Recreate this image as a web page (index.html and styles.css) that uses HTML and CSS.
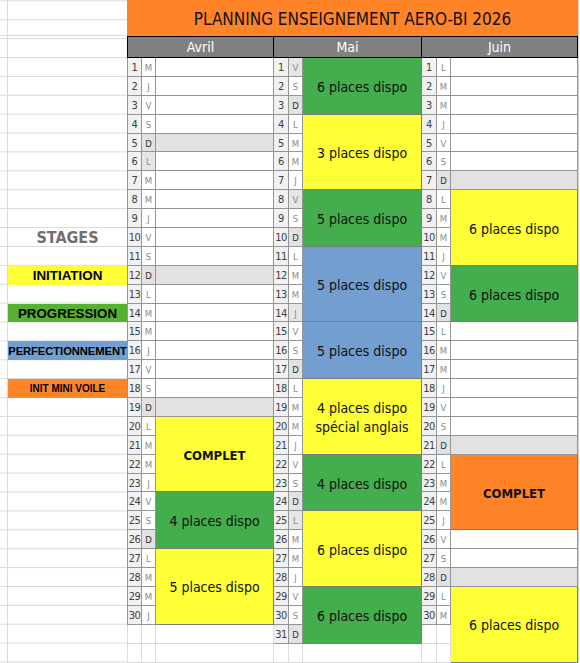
FILE: index.html
```html
<!DOCTYPE html>
<html lang="fr">
<head>
<meta charset="utf-8">
<title>Planning enseignement Aero-BI 2026</title>
<link rel="stylesheet" href="styles.css">
</head>
<body>
<div class="sheet">
  <div class="side">
    <div class="stages">STAGES</div>
    <div class="tag t-init">INITIATION</div>
    <div class="tag t-prog">PROGRESSION</div>
    <div class="tag t-perf">PERFECTIONNEMENT</div>
    <div class="tag t-mini">INIT MINI VOILE</div>
  </div>
  <div class="planning">
    <div class="title">PLANNING ENSEIGNEMENT AERO-BI 2026</div>
    <div class="heads">
      <div class="mh mh-avril">Avril</div>
      <div class="mh mh-mai">Mai</div>
      <div class="mh mh-juin">Juin</div>
    </div>
    <div class="months">
      <div class="month avril">
        <div class="n">1</div><div class="n">2</div><div class="n">3</div><div class="n">4</div><div class="n">5</div><div class="n">6</div><div class="n">7</div><div class="n">8</div><div class="n">9</div><div class="n">10</div>
        <div class="n">11</div><div class="n">12</div><div class="n">13</div><div class="n">14</div><div class="n">15</div><div class="n">16</div><div class="n">17</div><div class="n">18</div><div class="n">19</div><div class="n">20</div>
        <div class="n">21</div><div class="n">22</div><div class="n">23</div><div class="n">24</div><div class="n">25</div><div class="n">26</div><div class="n">27</div><div class="n">28</div><div class="n">29</div><div class="n">30</div>
        <div class="n x"></div><div class="n x"></div>

        <div class="d">M</div><div class="d">J</div><div class="d">V</div><div class="d">S</div><div class="d sun">D</div><div class="d hol">L</div><div class="d">M</div><div class="d">M</div><div class="d">J</div><div class="d">V</div>
        <div class="d">S</div><div class="d sun">D</div><div class="d">L</div><div class="d">M</div><div class="d">M</div><div class="d">J</div><div class="d">V</div><div class="d">S</div><div class="d sun">D</div><div class="d">L</div>
        <div class="d">M</div><div class="d">M</div><div class="d">J</div><div class="d">V</div><div class="d">S</div><div class="d sun">D</div><div class="d">L</div><div class="d">M</div><div class="d">M</div><div class="d">J</div>
        <div class="d x"></div><div class="d x"></div>

        <div class="c"></div><div class="c"></div><div class="c"></div><div class="c"></div><div class="c sun"></div>
        <div class="c"></div><div class="c"></div><div class="c"></div><div class="c"></div><div class="c"></div><div class="c"></div><div class="c sun"></div>
        <div class="c"></div><div class="c"></div><div class="c"></div><div class="c"></div><div class="c"></div><div class="c"></div><div class="c sun"></div>
        <div class="b yellow s4 strong">COMPLET</div>
        <div class="b green s3">4 places dispo</div>
        <div class="b yellow s4">5 places dispo</div>
        <div class="c x"></div><div class="c x"></div>
      </div>

      <div class="month mai">
        <div class="n">1</div><div class="n">2</div><div class="n">3</div><div class="n">4</div><div class="n">5</div><div class="n">6</div><div class="n">7</div><div class="n">8</div><div class="n">9</div><div class="n">10</div>
        <div class="n">11</div><div class="n">12</div><div class="n">13</div><div class="n">14</div><div class="n">15</div><div class="n">16</div><div class="n">17</div><div class="n">18</div><div class="n">19</div><div class="n">20</div>
        <div class="n">21</div><div class="n">22</div><div class="n">23</div><div class="n">24</div><div class="n">25</div><div class="n">26</div><div class="n">27</div><div class="n">28</div><div class="n">29</div><div class="n">30</div>
        <div class="n">31</div><div class="n x"></div>

        <div class="d hol">V</div><div class="d">S</div><div class="d sun">D</div><div class="d">L</div><div class="d">M</div><div class="d">M</div><div class="d">J</div><div class="d hol">V</div><div class="d">S</div><div class="d sun">D</div>
        <div class="d">L</div><div class="d">M</div><div class="d">M</div><div class="d hol">J</div><div class="d">V</div><div class="d">S</div><div class="d sun">D</div><div class="d">L</div><div class="d">M</div><div class="d">M</div>
        <div class="d">J</div><div class="d">V</div><div class="d">S</div><div class="d sun">D</div><div class="d hol">L</div><div class="d">M</div><div class="d">M</div><div class="d">J</div><div class="d">V</div><div class="d">S</div>
        <div class="d sun">D</div><div class="d x"></div>

        <div class="b green s3">6 places dispo</div>
        <div class="b yellow s4">3 places dispo</div>
        <div class="b green s3">5 places dispo</div>
        <div class="b blue s4">5 places dispo</div>
        <div class="b blue s3">5 places dispo</div>
        <div class="b yellow s4">4 places dispo<br>spécial anglais</div>
        <div class="b green s3">4 places dispo</div>
        <div class="b yellow s4">6 places dispo</div>
        <div class="b green s3">6 places dispo</div>
        <div class="c x"></div>
      </div>

      <div class="month juin">
        <div class="n">1</div><div class="n">2</div><div class="n">3</div><div class="n">4</div><div class="n">5</div><div class="n">6</div><div class="n">7</div><div class="n">8</div><div class="n">9</div><div class="n">10</div>
        <div class="n">11</div><div class="n">12</div><div class="n">13</div><div class="n">14</div><div class="n">15</div><div class="n">16</div><div class="n">17</div><div class="n">18</div><div class="n">19</div><div class="n">20</div>
        <div class="n">21</div><div class="n">22</div><div class="n">23</div><div class="n">24</div><div class="n">25</div><div class="n">26</div><div class="n">27</div><div class="n">28</div><div class="n">29</div><div class="n">30</div>
        <div class="n x"></div><div class="n x"></div>

        <div class="d">L</div><div class="d">M</div><div class="d">M</div><div class="d">J</div><div class="d">V</div><div class="d">S</div><div class="d sun">D</div><div class="d">L</div><div class="d">M</div><div class="d">M</div>
        <div class="d">J</div><div class="d">V</div><div class="d">S</div><div class="d sun">D</div><div class="d">L</div><div class="d">M</div><div class="d">M</div><div class="d">J</div><div class="d">V</div><div class="d">S</div>
        <div class="d sun">D</div><div class="d">L</div><div class="d">M</div><div class="d">M</div><div class="d">J</div><div class="d">V</div><div class="d">S</div><div class="d sun">D</div><div class="d">L</div><div class="d">M</div>
        <div class="d x"></div><div class="d x"></div>

        <div class="c"></div><div class="c"></div><div class="c"></div><div class="c"></div><div class="c"></div><div class="c"></div><div class="c sun"></div>
        <div class="b yellow s4">6 places dispo</div>
        <div class="b green s3">6 places dispo</div>
        <div class="c"></div><div class="c"></div><div class="c"></div><div class="c"></div><div class="c"></div><div class="c"></div><div class="c sun"></div>
        <div class="b orange s4 strong">COMPLET</div>
        <div class="c"></div><div class="c"></div><div class="c sun"></div>
        <div class="b yellow s4">6 places dispo</div>
      </div>
    </div>
  </div>
  <div class="edge"></div>
</div>
</body>
</html>
```
FILE: styles.css
```css
* {
  box-sizing: border-box;
}

html, body {
  margin: 0;
  padding: 0;
  background: #fff;
}

body {
  width: 580px;
  height: 663px;
  overflow: hidden;
  font-family: "DejaVu Sans Condensed", "DejaVu Sans", sans-serif;
  font-stretch: condensed;
  color: #111;
}

.sheet {
  display: flex;
  width: 580px;
  height: 663px;
}

/* ---------- left legend column (spreadsheet gridlines) ---------- */
.side {
  flex: none;
  width: 127px;
  height: 663px;
  display: grid;
  grid-template-columns: 8px 119px;
  grid-template-rows: 36px 22px repeat(32, 18.9px);
  overflow: hidden;
  background-image:
    linear-gradient(to right, transparent 7px, #d9d9d9 7px, #d9d9d9 8px, transparent 8px),
    linear-gradient(to bottom, transparent 35px, #d9d9d9 35px, #d9d9d9 36px, transparent 36px, transparent 57px, #d9d9d9 57px, #d9d9d9 58px, transparent 58px),
    repeating-linear-gradient(to bottom, transparent 0, transparent 17.9px, #d9d9d9 17.9px, #d9d9d9 18.9px);
  background-repeat: no-repeat, no-repeat, repeat-y;
  background-position: 0 0, 0 0, 0 58px;
  background-size: 100% 100%, 100% 100%, 100% 18.9px;
}

.stages {
  grid-column: 2;
  grid-row: 12;
  display: flex;
  align-items: center;
  justify-content: center;
  font-size: 16px;
  font-weight: bold;
  color: #707070;
  white-space: nowrap;
  padding-top: 1px;
}

.tag {
  grid-column: 2;
  display: flex;
  align-items: center;
  justify-content: center;
  white-space: nowrap;
  overflow: hidden;
  font-family: "Liberation Sans", Arial, sans-serif;
  font-stretch: normal;
  font-weight: bold;
  color: #000;
}

.t-init {
  grid-row: 14;
  background: #ffff38;
  font-size: 13.4px;
}

.t-prog {
  grid-row: 16;
  background: #56b131;
  font-size: 13.3px;
}

.t-perf {
  grid-row: 18;
  background: #729fcf;
  font-size: 11.2px;
  letter-spacing: -0.05px;
}

.t-mini {
  grid-row: 20;
  background: #ff8427;
  font-size: 10px;
}

/* ---------- planning ---------- */
.planning {
  flex: none;
  width: 451px;
  display: flex;
  flex-direction: column;
}

.title {
  height: 36px;
  background: #ff8427;
  display: flex;
  align-items: center;
  justify-content: center;
  font-size: 17px;
  color: #111;
  padding-top: 2px;
}

.heads {
  display: flex;
  height: 22px;
}

.mh {
  background: #808080;
  color: #fff;
  font-size: 14px;
  display: flex;
  align-items: center;
  justify-content: center;
  border-top: 1px solid #000;
  border-bottom: 1px solid #000;
  border-right: 1px solid #000;
}

.mh-avril {
  width: 147px;
  border-left: 1px solid #000;
}

.mh-mai {
  width: 148px;
}

.mh-juin {
  width: 156px;
}

.months {
  display: flex;
}

.month {
  display: grid;
  grid-template-rows: repeat(32, 18.9px);
  grid-auto-flow: column;
}

.avril {
  width: 147px;
  grid-template-columns: 15px 14px 118px;
}

.mai {
  width: 148px;
  grid-template-columns: 15px 14px 119px;
}

.juin {
  width: 156px;
  grid-template-columns: 15px 14px 127px;
}

.n, .d, .c, .b {
  border-right: 1px solid #959595;
  border-bottom: 1px solid #959595;
}

.n {
  background: #f1f1f1;
  color: #404040;
  font-size: 11px;
  line-height: 19px;
  text-align: center;
  letter-spacing: -0.5px;
  white-space: nowrap;
}

.avril .n {
  border-left: 1px solid #959595;
}

.d {
  background: #fff;
  color: #8a8a8a;
  font-size: 9.5px;
  line-height: 19px;
  text-align: center;
}

.d.sun {
  background: #e2e2e2;
  color: #333;
}

.d.hol {
  background: #e6e6e6;
}

.c {
  background: #fff;
}

.c.sun {
  background: #e2e2e2;
}

.n.x, .d.x, .c.x {
  background: #fff;
  border-right-color: #dcdcdc;
  border-bottom-color: #dcdcdc;
}

.avril .n.x {
  border-left-color: #dcdcdc;
}

.b {
  display: flex;
  align-items: center;
  justify-content: center;
  text-align: center;
  font-size: 14px;
  line-height: 19px;
  color: #111;
  padding-top: 3px;
  border-right-color: #7c7c7c;
  border-bottom-color: #7c7c7c;
}

.b.strong {
  font-weight: bold;
  font-size: 13px;
}

.s3 {
  grid-row: span 3;
}

.s4 {
  grid-row: span 4;
}

.yellow {
  background: #ffff38;
}

.green {
  background: #44ad4e;
}

.blue {
  background: #729fcf;
}

.orange {
  background: #ff8427;
}

.edge {
  flex: none;
  width: 2px;
  border-left: 1px solid #d4d4d4;
}
```
